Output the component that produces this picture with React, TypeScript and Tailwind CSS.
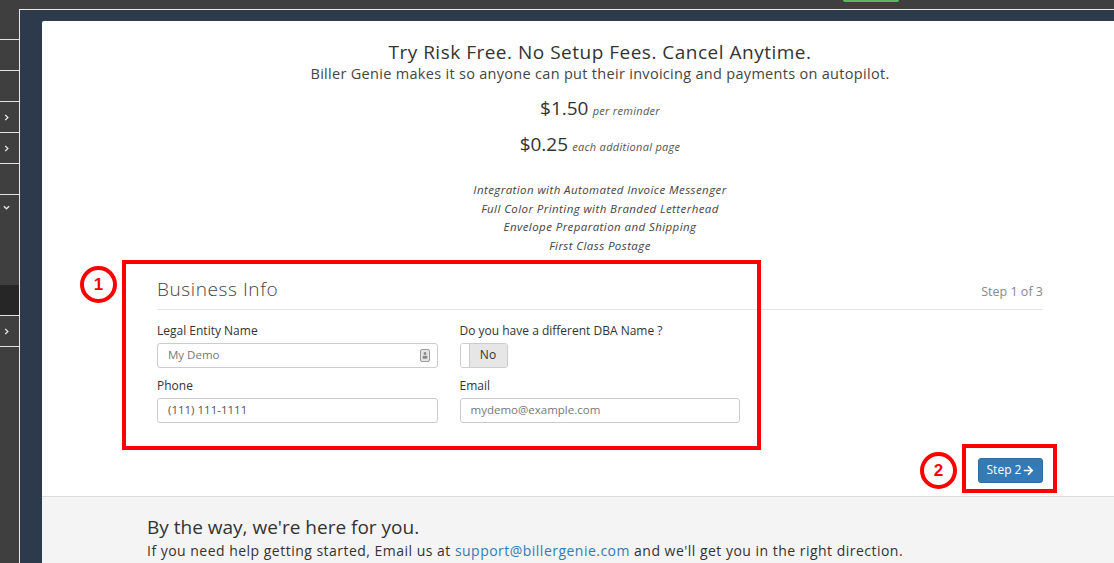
import React from "react";

const F = { fontFamily: "'Open Sans', Lato, sans-serif" };

function Chevron({ down = false }: { down?: boolean }) {
  return (
    <svg width="7" height="7" viewBox="0 0 8 8" className="block">
      {down ? (
        <path d="M1 2.5 L4 5.5 L7 2.5" fill="none" stroke="#dde6f0" strokeWidth="1.6" />
      ) : (
        <path d="M2.5 1 L5.5 4 L2.5 7" fill="none" stroke="#dde6f0" strokeWidth="1.6" />
      )}
    </svg>
  );
}

function Sidebar() {
  return (
    <div className="w-[19px] h-full bg-[#3f3f3f] flex flex-col shrink-0">
      <div className="h-[39px]" />
      <div className="h-[31px] border-t border-[#e2e2e2]" />
      <div className="h-[31px] border-t border-[#e2e2e2]" />
      <div className="h-[31px] border-t border-[#e2e2e2] flex items-center pl-[3px]">
        <Chevron />
      </div>
      <div className="h-[31px] border-t border-[#e2e2e2] flex items-center pl-[3px]">
        <Chevron />
      </div>
      <div className="h-[31px] border-t border-[#e2e2e2]" />
      <div className="h-[91px] border-t border-[#e2e2e2] pl-[3px] pt-[9px]">
        <Chevron down />
      </div>
      <div className="h-[30px] bg-[#262626]" />
      <div className="h-[31px] border-t border-[#e2e2e2] flex items-center pl-[3px]">
        <Chevron />
      </div>
      <div className="flex-1 border-t border-[#e2e2e2]" />
    </div>
  );
}

function AutofillIcon() {
  return (
    <svg width="10" height="13" viewBox="0 0 10 13">
      <rect x="0.5" y="0.5" width="9" height="12" rx="1.5" fill="#e4e4e4" stroke="#9a9a9a" />
      <circle cx="5" cy="4.5" r="1.4" fill="#8a8a8a" />
      <rect x="2.6" y="6.8" width="4.8" height="3" rx="1" fill="#8a8a8a" />
    </svg>
  );
}

function ArrowRight() {
  return (
    <svg width="11" height="11" viewBox="0 0 448 512" className="inline-block">
      <path
        fill="#fff"
        d="M190.5 66.9l22.2-22.2c9.4-9.4 24.6-9.4 33.9 0L441 239c9.4 9.4 9.4 24.6 0 33.9L246.6 467.3c-9.4 9.4-24.6 9.4-33.9 0l-22.2-22.2c-9.5-9.5-9.3-25 .4-34.3L311.4 296H24c-13.3 0-24-10.7-24-24v-32c0-13.3 10.7-24 24-24h287.4L190.9 101.2c-9.8-9.3-10-24.8-.4-34.3z"
      />
    </svg>
  );
}

function Badge({ n, className }: { n: string; className: string }) {
  return (
    <div
      className={
        "absolute w-[37px] h-[37px] rounded-full border-[4px] border-[#f00] bg-white flex items-center justify-center text-[#f00] text-[17px] font-bold " +
        className
      }
      style={{ fontFamily: "'Liberation Sans', Arial, sans-serif" }}
    >
      {n}
    </div>
  );
}

export default function App() {
  return (
    <div className="relative w-[1114px] h-[563px] overflow-hidden bg-[#3f3f3f] flex text-[#333]" style={F}>
      <Sidebar />
      <div className="flex-1 flex flex-col min-w-0">
        <div className="h-[9px] bg-[#3f3f3f] relative shrink-0">
          <div className="absolute left-[824px] top-0 w-[56px] h-[2px] bg-[#5cb85c] rounded-b-[2px]" />
        </div>
        <div className="flex-1 border-t border-l border-[#e8e8e8] bg-[#2c3a4b] pl-[22px] pt-[11px] flex min-h-0">
          <div className="flex-1 bg-white rounded-tl-[2px] flex flex-col">
            {/* main content */}
            <div className="flex-1 pl-[115px] pr-[71px]">
              <div className="text-center">
                <h1 className="mt-[19px] text-[19px] leading-[24px] tracking-[0.5px] text-[#333]">
                  Try Risk Free. No Setup Fees. Cancel Anytime.
                </h1>
                <p className="text-[14.5px] leading-[20px] tracking-[0.3px] text-[#444]">
                  Biller Genie makes it so anyone can put their invoicing and payments on autopilot.
                </p>
                <p className="mt-[12px] leading-[24px]">
                  <span className="text-[19px] text-[#333]">$1.50</span>{" "}
                  <span className="text-[11px] italic tracking-[0.3px] text-[#555]">per reminder</span>
                </p>
                <p className="mt-[9px] leading-[24px]">
                  <span className="text-[19px] text-[#333]">$0.25</span>{" "}
                  <span className="text-[11px] italic tracking-[0.3px] text-[#555]">each additional page</span>
                </p>
                <ul className="mt-[22px] text-[11.5px] leading-[18.7px] italic tracking-[0.42px] text-[#444]">
                  <li>Integration with Automated Invoice Messenger</li>
                  <li>Full Color Printing with Branded Letterhead</li>
                  <li>Envelope Preparation and Shipping</li>
                  <li>First Class Postage</li>
                </ul>
              </div>

              {/* form */}
              <div className="mt-[21px]">
                <div className="flex items-baseline justify-between border-b border-[#e6e6e6] pb-[7px]">
                  <h2 className="text-[19px] leading-[24px] tracking-[0.6px] text-[#444] font-light">Business Info</h2>
                  <span className="text-[12.5px] text-[#888]">Step 1 of 3</span>
                </div>
                <div className="grid grid-cols-2 gap-x-[22px] w-[583px]">
                  <div>
                    <label className="block mt-[13px] text-[12px] leading-[16px] text-[#333]">Legal Entity Name</label>
                    <div className="mt-[4px] h-[25px] border border-[#ccc] rounded-[3px] flex items-center justify-between pl-[10px] pr-[7px] text-[11.5px] text-[#777]">
                      <span>My Demo</span>
                      <AutofillIcon />
                    </div>
                  </div>
                  <div>
                    <label className="block mt-[13px] text-[12px] leading-[16px] text-[#333]">
                      Do you have a different DBA Name ?
                    </label>
                    <div className="mt-[4px] h-[25px] w-[48px] border border-[#ccc] rounded-[3px] flex overflow-hidden">
                      <div className="w-[9px] bg-white border-r border-[#ccc]" />
                      <div className="flex-1 bg-[#e6e6e6] flex items-center justify-center text-[12px] text-[#333]">
                        No
                      </div>
                    </div>
                  </div>
                  <div>
                    <label className="block mt-[10px] text-[12px] leading-[16px] text-[#333]">Phone</label>
                    <div className="mt-[4px] h-[25px] border border-[#ccc] rounded-[3px] flex items-center pl-[10px] text-[11.5px] text-[#555]">
                      (111) 111-1111
                    </div>
                  </div>
                  <div>
                    <label className="block mt-[10px] text-[12px] leading-[16px] text-[#333]">Email</label>
                    <div className="mt-[4px] h-[25px] border border-[#ccc] rounded-[3px] flex items-center pl-[10px] text-[11.5px] text-[#777]">
                      mydemo@example.com
                    </div>
                  </div>
                </div>
                <div className="flex justify-end mt-[35px]">
                  <button className="h-[25px] w-[65px] bg-[#337ab7] border border-[#2e6da4] rounded-[3px] text-white text-[12px] flex items-center justify-center gap-[2px]">
                    <span>Step 2</span>
                    <ArrowRight />
                  </button>
                </div>
              </div>
            </div>

            {/* footer */}
            <div className="h-[67px] shrink-0 bg-[#f4f4f4] border-t border-[#dcdcdc] pl-[105px] pt-[18px]">
              <p className="text-[19px] leading-[24px] text-[#333]">By the way, we're here for you.</p>
              <p className="mt-[3px] text-[14px] leading-[18px] tracking-[0.48px] text-[#333]">
                If you need help getting started, Email us at{" "}
                <span className="text-[#337ab7]">support@billergenie.com</span> and we'll get you in the right direction.
              </p>
            </div>
          </div>
        </div>
      </div>

      {/* annotations */}
      <div className="absolute left-[122px] top-[260px] w-[639px] h-[190px] border-[4px] border-[#f00] pointer-events-none" />
      <Badge n="1" className="left-[80px] top-[266px]" />
      <div className="absolute left-[962px] top-[444px] w-[95px] h-[49px] border-[4px] border-[#f00] pointer-events-none" />
      <Badge n="2" className="left-[920px] top-[452px]" />
    </div>
  );
}
